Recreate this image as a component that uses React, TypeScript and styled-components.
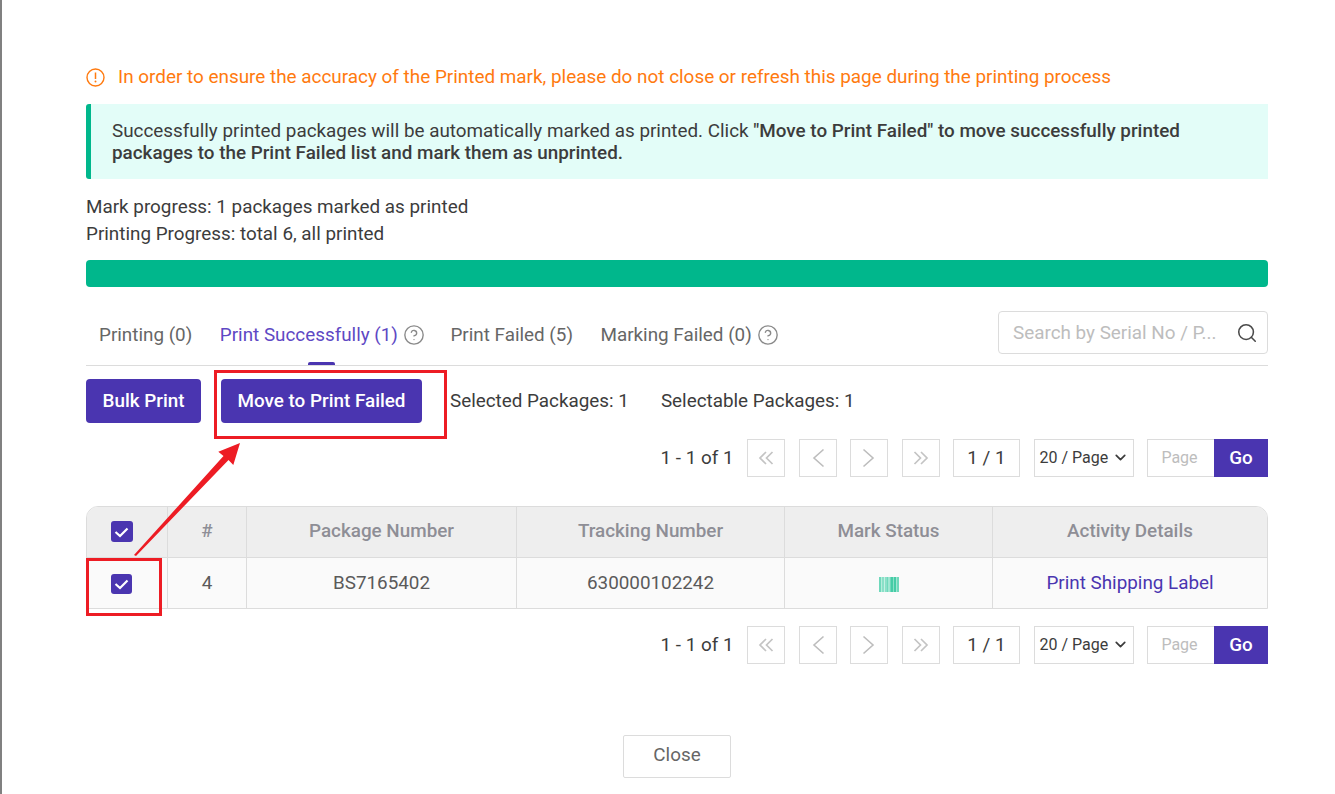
import * as React from 'react';
import styled, { createGlobalStyle } from 'styled-components';
import { ChevronDown, CircleHelp, Search } from 'lucide-react';

const GlobalStyle = createGlobalStyle`
    html, body {
        margin: 0;
        padding: 0;
        background: #fff;
    }
    * {
        box-sizing: border-box;
    }
`;

const Page = styled.div`
    position: relative;
    width: 1335px;
    height: 794px;
    overflow: hidden;
    padding: 66px 67px 0 84px;
    border-left: 2px solid #808080;
    font-family: Roboto, sans-serif;
    font-size: 18.85px;
    color: #3c3c3c;
`;

const Warning = styled.div`
    display: flex;
    align-items: center;
    gap: 13px;
    height: 22px;
    color: #ff7a0f;
    font-size: 18.9px;
    line-height: 22px;
`;

const InfoBox = styled.div`
    margin-top: 16px;
    padding: 16px 24px 15px 21px;
    height: 75px;
    background: #e3fdf8;
    border-left: 5px solid #00b78c;
    border-radius: 3px 0 0 3px;
    line-height: 22px;

    b {
        font-weight: 500;
    }
`;

const Progress = styled.div`
    margin-top: 15px;
    line-height: 27px;
`;

const Bar = styled.div`
    margin-top: 12px;
    height: 27px;
    background: #00b78c;
    border-radius: 4px;
`;

const TabRow = styled.div`
    display: flex;
    justify-content: space-between;
    margin-top: 24px;
    height: 55px;
    border-bottom: 1px solid #dcdcdc;
`;

const TabList = styled.div`
    display: flex;
    gap: 27.5px;
    padding: 0 0 0 13px;
`;

const Tab = styled.div<{ $active?: boolean }>`
    position: relative;
    display: flex;
    align-items: center;
    gap: 6px;
    height: 47px;
    color: ${(p) => (p.$active ? '#5e48c4' : '#666')};

    svg {
        margin: 0 -2px 0 -1px;
        color: #8a8a8a;
    }

    ${(p) =>
        p.$active &&
        `&::after {
            content: '';
            position: absolute;
            bottom: -7px;
            left: 88px;
            width: 27px;
            height: 3px;
            border-radius: 2px 2px 0 0;
            background: #4a35b0;
        }`}
`;

const SearchBox = styled.div`
    display: flex;
    align-items: center;
    justify-content: space-between;
    width: 270px;
    height: 43px;
    padding: 0 9px 0 14px;
    border: 1px solid #dcdcdc;
    border-radius: 4px;
    color: #bdbdbd;
    white-space: nowrap;

    svg {
        color: #4a4a4a;
    }
`;

const ActionRow = styled.div`
    display: flex;
    align-items: center;
    margin-top: 13px;
    height: 44px;
`;

const PrimaryButton = styled.button<{ $width: number }>`
    height: 44px;
    padding: 0;
    width: ${(p) => p.$width}px;
    margin-right: 20px;
    border: 0;
    border-radius: 4px;
    background: #4a35b0;
    color: #fff;
    font-family: inherit;
    font-size: 18.85px;
    font-weight: 500;
`;

const Count = styled.span`
    margin-left: 8px;
    margin-right: 24px;
`;

const Pagination = styled.div<{ $top: number }>`
    display: flex;
    align-items: center;
    justify-content: flex-end;
    gap: 13.5px;
    margin-top: ${(p) => p.$top}px;
    height: 38px;
`;

const PageButton = styled.div`
    display: flex;
    align-items: center;
    justify-content: center;
    width: 38px;
    height: 38px;
    border: 1px solid #dcdcdc;
    color: #bdbdbd;
`;

const PageCount = styled.div`
    display: flex;
    align-items: center;
    justify-content: center;
    width: 67px;
    height: 38px;
    border: 1px solid #dcdcdc;
`;

const PageSize = styled.div`
    display: flex;
    align-items: center;
    justify-content: space-between;
    width: 100px;
    height: 38px;
    padding: 0 4px 2px 5px;
    border: 1px solid #dcdcdc;
    font-size: 16px;
`;

const Jump = styled.div`
    display: flex;
    height: 38px;
`;

const JumpInput = styled.div`
    display: flex;
    align-items: center;
    justify-content: center;
    width: 67px;
    padding: 0 3px 2px 0;
    border: 1px solid #dcdcdc;
    border-right: 0;
    color: #bdbdbd;
    font-size: 16px;
`;

const GoButton = styled.div`
    display: flex;
    align-items: center;
    justify-content: center;
    width: 54px;
    background: #4a35b0;
    color: #fff;
    font-weight: 500;
`;

const Table = styled.table`
    width: 1182px;
    margin-top: 29px;
    table-layout: fixed;
    border-collapse: separate;
    border-spacing: 0;
    border: 1px solid #dcdcdc;
    border-radius: 12px 12px 0 0;
    overflow: hidden;
`;

const HeadCell = styled.th`
    height: 51px;
    padding: 0 0 2px;
    background: #eeeeee;
    border-right: 1px solid #dcdcdc;
    border-bottom: 1px solid #dcdcdc;
    color: #8e8e96;
    font-size: 18.85px;
    font-weight: 500;
    text-align: center;

    &:last-child {
        border-right: 0;
    }
`;

const BodyCell = styled.td`
    height: 50px;
    padding: 0;
    background: #fafafa;
    border-right: 1px solid #dcdcdc;
    color: #5a5a5a;
    text-align: center;

    &:last-child {
        border-right: 0;
    }
`;

const LabelLink = styled.a`
    color: #4a35b0;
`;

const Check = styled.span<{ $small?: boolean }>`
    display: inline-flex;
    align-items: center;
    justify-content: center;
    vertical-align: middle;
    width: ${(p) => (p.$small ? 21 : 22)}px;
    height: ${(p) => (p.$small ? 20 : 21)}px;
    margin-right: 11px;
    border-radius: 3px;
    background: #4a35b0;
`;

const Footer = styled.div`
    display: flex;
    justify-content: center;
    margin-top: 71px;
`;

const CloseButton = styled.button`
    width: 108px;
    height: 43px;
    padding: 0 0 4px;
    background: #fff;
    border: 1px solid #dcdcdc;
    border-radius: 2px;
    color: #666;
    font-family: inherit;
    font-size: 18.85px;
`;

const Annotations = styled.svg`
    position: absolute;
    top: 0;
    left: -2px;
    pointer-events: none;
`;

const CheckMark = () => (
    <svg width="15" height="12" viewBox="0 0 15 12" fill="none">
        <path d="M1.5 6 L6 10 L13.5 2.5" stroke="#fff" strokeWidth="2.2" />
    </svg>
);

const WarningIcon = () => (
    <svg width="19" height="19" viewBox="0 0 19 19" fill="none">
        <circle cx="9.5" cy="9.5" r="8.5" stroke="#ff7a0f" strokeWidth="1.4" />
        <path d="M9.5 4.5 V11" stroke="#ff7a0f" strokeWidth="1.5" />
        <circle cx="9.5" cy="13.6" r="1" fill="#ff7a0f" />
    </svg>
);

const SingleChevron = ({ flip }: { flip?: boolean }) => (
    <svg width="14" height="20" viewBox="0 0 14 20" fill="none" style={{ transform: flip ? 'scaleX(-1)' : undefined }}>
        <path d="M12.5 1.5 L3 10 L12.5 18.5" stroke="#bdbdbd" strokeWidth="1.6" />
    </svg>
);

const DoubleChevron = ({ flip }: { flip?: boolean }) => (
    <svg width="16" height="14" viewBox="0 0 16 14" fill="none" style={{ transform: flip ? 'scaleX(-1)' : undefined }}>
        <path d="M8 1 L2 7 L8 13 M14.5 1 L8.5 7 L14.5 13" stroke="#c4c4c4" strokeWidth="1.7" />
    </svg>
);

const STRIPES: [number, string][] = [
    [2, '#6fd8bb'],
    [1, '#b5eddc'],
    [2, '#8ae0c8'],
    [1, '#c4f0e3'],
    [2, '#8ae0c8'],
    [1, '#6fd8bb'],
    [2, '#a0e6d2'],
    [1, '#6fd8bb'],
    [2, '#45cca6'],
    [1, '#8ae0c8'],
    [2, '#45cca6'],
    [1, '#a0e6d2'],
    [2, '#6fd8bb'],
];

const Barcode = () => {
    let x = 0;
    return (
        <svg width="20" height="15" viewBox="0 0 20 15" style={{ verticalAlign: 'middle' }}>
            {STRIPES.map(([w, fill], i) => {
                const bar = <rect key={i} x={x} width={w} height="15" fill={fill} />;
                x += w;
                return bar;
            })}
        </svg>
    );
};

const Pager = ({ top }: { top: number }) => (
    <Pagination $top={top}>
        <span>1 - 1 of 1</span>
        <PageButton>
            <DoubleChevron />
        </PageButton>
        <PageButton>
            <SingleChevron />
        </PageButton>
        <PageButton>
            <SingleChevron flip />
        </PageButton>
        <PageButton>
            <DoubleChevron flip />
        </PageButton>
        <PageCount>1 / 1</PageCount>
        <PageSize>
            20 / Page
            <ChevronDown size={17} strokeWidth={2.4} />
        </PageSize>
        <Jump>
            <JumpInput>Page</JumpInput>
            <GoButton>Go</GoButton>
        </Jump>
    </Pagination>
);

export default function App() {
    return (
        <Page>
            <GlobalStyle />
            <Warning>
                <WarningIcon />
                In order to ensure the accuracy of the Printed mark, please do not close or refresh this page during
                the printing process
            </Warning>
            <InfoBox>
                Successfully printed packages will be automatically marked as printed. Click{' '}
                <b>"Move to Print Failed" to move successfully printed</b>{' '}
                <b>packages to the Print Failed list and mark them as unprinted.</b>
            </InfoBox>
            <Progress>
                Mark progress: 1 packages marked as printed
                <br />
                Printing Progress: total 6, all printed
            </Progress>
            <Bar />
            <TabRow>
                <TabList>
                    <Tab>Printing (0)</Tab>
                    <Tab $active>
                        Print Successfully (1)
                        <CircleHelp size={22} strokeWidth={1.5} />
                    </Tab>
                    <Tab>Print Failed (5)</Tab>
                    <Tab>
                        Marking Failed (0)
                        <CircleHelp size={22} strokeWidth={1.5} />
                    </Tab>
                </TabList>
                <SearchBox>
                    Search by Serial No / P...
                    <Search size={22} strokeWidth={1.7} />
                </SearchBox>
            </TabRow>
            <ActionRow>
                <PrimaryButton $width={115}>Bulk Print</PrimaryButton>
                <PrimaryButton $width={201}>Move to Print Failed</PrimaryButton>
                <Count>Selected Packages: 1</Count>
                <Count>Selectable Packages: 1</Count>
            </ActionRow>
            <Pager top={16} />
            <Table>
                <colgroup>
                    <col width="81" />
                    <col width="79" />
                    <col width="270" />
                    <col width="268" />
                    <col width="208" />
                    <col />
                </colgroup>
                <thead>
                    <tr>
                        <HeadCell>
                            <Check>
                                <CheckMark />
                            </Check>
                        </HeadCell>
                        <HeadCell>#</HeadCell>
                        <HeadCell>Package Number</HeadCell>
                        <HeadCell>Tracking Number</HeadCell>
                        <HeadCell>Mark Status</HeadCell>
                        <HeadCell>Activity Details</HeadCell>
                    </tr>
                </thead>
                <tbody>
                    <tr>
                        <BodyCell>
                            <Check $small>
                                <CheckMark />
                            </Check>
                        </BodyCell>
                        <BodyCell>4</BodyCell>
                        <BodyCell>BS7165402</BodyCell>
                        <BodyCell>630000102242</BodyCell>
                        <BodyCell>
                            <Barcode />
                        </BodyCell>
                        <BodyCell>
                            <LabelLink>Print Shipping Label</LabelLink>
                        </BodyCell>
                    </tr>
                </tbody>
            </Table>
            <Pager top={17} />
            <Footer>
                <CloseButton>Close</CloseButton>
            </Footer>
            <Annotations width="1335" height="794" viewBox="0 0 1335 794" fill="none">
                <rect x="215.5" y="371.5" width="230" height="66" stroke="#ed1c24" strokeWidth="3" />
                <rect x="87.5" y="559.5" width="73" height="55" stroke="#ed1c24" strokeWidth="3" />
                <polygon
                    points="134,555 223.5,456 218.3,451.7 240,443 233.3,465 228.5,460 136,556"
                    fill="#ed1c24"
                />
            </Annotations>
        </Page>
    );
}
